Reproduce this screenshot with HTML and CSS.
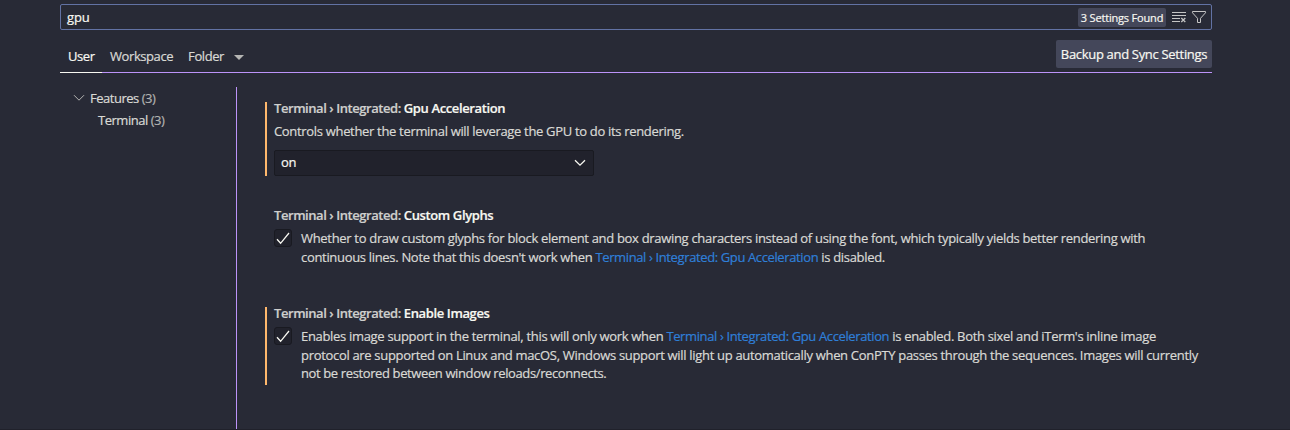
FILE: index.html
```html
<!DOCTYPE html>
<html lang="en">
<head>
<meta charset="utf-8">
<title>Settings</title>
<link rel="stylesheet" href="styles.css">
</head>
<body>
<main class="settings">
  <div class="search">
    <span class="query">gpu</span>
    <span class="count">3 Settings Found</span>
    <svg class="icon clear" width="16" height="16" viewBox="0 0 16 16"><path d="M1 3.5h14M1 6.5h14M1 9.5h8M1 12.5h8"/><path class="x" d="M10.3 9l4 4M14.3 9l-4 4"/></svg>
    <svg class="icon" width="16" height="16" viewBox="0 0 16 16"><path d="M1.5 2.5h13v1.3L9.5 9.3v4.2h-3V9.3l-5-5.5z"/></svg>
  </div>
  <header class="tabs">
    <span class="tab active">User</span>
    <span class="tab">Workspace</span>
    <span class="tab folder">Folder<svg class="caret" width="10" height="5" viewBox="0 0 10 5"><path d="M0 0h10L5 5z"/></svg></span>
    <button class="sync">Backup and Sync Settings</button>
  </header>
  <div class="body">
    <nav class="toc">
      <div class="toc-row"><svg class="chev" width="12" height="8" viewBox="0 0 12 8"><path d="M1 1.2l5 5 5-5"/></svg><span>Features <i>(3)</i></span></div>
      <div class="toc-row child"><span>Terminal <i>(3)</i></span></div>
    </nav>
    <section class="list">
      <article class="item modified first">
        <h3><span>Terminal › Integrated: </span>Gpu Acceleration</h3>
        <p class="desc">Controls whether the terminal will leverage the GPU to do its rendering.</p>
        <div class="select"><span>on</span><svg width="12" height="8" viewBox="0 0 12 8"><path d="M1 1.2l5 5 5-5"/></svg></div>
      </article>
      <article class="item second">
        <h3><span>Terminal › Integrated: </span>Custom Glyphs</h3>
        <div class="row">
          <span class="check"><svg width="16" height="16" viewBox="0 0 16 16"><path d="M2 9.2l3.6 4.1L14 3"/></svg></span>
          <p><span class="line">Whether to draw custom glyphs for block element and box drawing characters instead of using the font, which typically yields better rendering with</span>
          <span class="line">continuous lines. Note that this doesn't work when <a>Terminal › Integrated: Gpu Acceleration</a> is disabled.</span></p>
        </div>
      </article>
      <article class="item modified third">
        <h3><span>Terminal › Integrated: </span>Enable Images</h3>
        <div class="row">
          <span class="check"><svg width="16" height="16" viewBox="0 0 16 16"><path d="M2 9.2l3.6 4.1L14 3"/></svg></span>
          <p><span class="line">Enables image support in the terminal, this will only work when <a>Terminal › Integrated: Gpu Acceleration</a> is enabled. Both sixel and iTerm's inline image</span>
          <span class="line">protocol are supported on Linux and macOS, Windows support will light up automatically when ConPTY passes through the sequences. Images will currently</span>
          <span class="line last">not be restored between window reloads/reconnects.</span></p>
        </div>
      </article>
    </section>
  </div>
</main>
</body>
</html>
```
FILE: styles.css
```css
* { box-sizing: border-box; }
body {
  margin: 0;
  height: 430px;
  overflow: hidden;
  background: #282a36;
  border-bottom: 1px solid #20212b;
  color: #d9d9d5;
  font: 13px/18px "Segoe UI", "Open Sans", "Noto Sans", sans-serif;
  letter-spacing: -0.32px;
  white-space: nowrap;
  -webkit-text-stroke: 0.2px;
}
.settings { width: 1152px; height: 429px; margin-left: 60px; padding-top: 4px; display: flex; flex-direction: column; }
.search {
  height: 26px;
  flex: none;
  border: 1px solid #6272a4;
  border-radius: 2px;
  display: flex;
  align-items: center;
  padding: 0 4px 0 6px;
}
.query { flex: 1; color: #f8f8f2; letter-spacing: -0.1px; }
.count { height: 19px; width: 88px; margin-right: 5px; border-radius: 2px; background: #44475a; color: #f8f8f2; font-size: 11px; line-height: 19px; text-align: center; letter-spacing: -0.18px; }
.icon { fill: none; stroke: #c5c5c5; stroke-width: 1; }
.icon .x { stroke-width: 1.3; }
.clear { margin-right: 4px; }
.tabs { height: 43px; flex: none; display: flex; border-bottom: 1px solid #bd93f9; }
.tab { height: 43px; padding: 17px 8px 0; color: #d9d9d5; display: flex; letter-spacing: -0.42px; }
.tab.active { width: 42px; color: #f8f8f2; border-bottom: 1px solid #f8f8f2; }
.folder { padding-left: 7px; }
.caret { margin: 8px 0 0 10px; fill: #b5b5b3; }
.sync { margin: 10px 0 0 auto; width: 156px; height: 28px; padding: 0; border: 0; border-radius: 2px; background: #44475a; color: #f8f8f2; font: inherit; letter-spacing: inherit; }
.body { flex: 1; display: flex; padding-top: 14px; }
.toc { width: 177px; border-right: 1px solid #bd93f9; }
.toc-row { height: 22px; line-height: 22px; padding-left: 13px; display: flex; align-items: center; letter-spacing: -0.48px; }
.toc-row.child { padding-left: 38px; }
.toc-row i { font-style: normal; color: #b2b2b0; }
.chev { margin-right: 5px; fill: none; stroke: #b5b5b3; }
.list { padding: 15px 0 0 28px; }
.item { padding-left: 7px; border-left: 2px solid transparent; }
.modified { border-color: #ffb86c; }
.first { height: 74px; }
.second { margin-top: 33px; height: 78px; }
.third { margin-top: 20px; height: 78px; }
h3 { margin: 0; height: 21px; line-height: 12px; font-size: 13px; font-weight: 600; color: #f8f8f2; letter-spacing: -0.37px; }
h3 span { color: #cfcfcd; letter-spacing: -0.44px; }
p { margin: 0; }
.desc { height: 18px; margin-top: -1px; }
.select { width: 320px; height: 26px; margin-top: 10px; padding: 0 7px 0 6px; display: flex; align-items: center; justify-content: space-between; background: #21222c; border: 1px solid #191a21; border-radius: 2px; color: #f8f8f2; }
.select span { padding-bottom: 2px; }
.select svg { fill: none; stroke: #f8f8f2; stroke-width: 1.3; }
.row { display: flex; }
.row p { margin-top: -1px; }
.check { width: 18px; height: 18px; margin: -1px 9px 0 0; display: flex; align-items: center; justify-content: center; background: #21222c; border: 1px solid #191a21; border-radius: 3px; }
.check svg { fill: none; stroke: #f8f8f2; stroke-width: 1.3; }
.line { display: block; letter-spacing: -0.315px; }
.line:first-child { height: 19px; }
.line.last { letter-spacing: -0.38px; }
a { color: #2f7fd8; letter-spacing: -0.38px; }
```
